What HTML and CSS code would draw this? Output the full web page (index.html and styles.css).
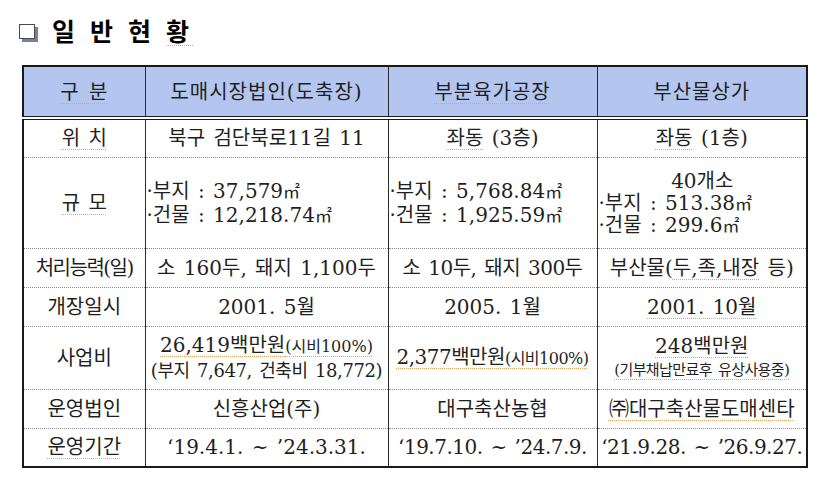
FILE: index.html
```html
<!DOCTYPE html>
<html lang="ko">
<head>
<meta charset="utf-8">
<title>일반현황</title>
<link rel="stylesheet" href="styles.css">
</head>
<body>
<div class="page">
  <h1 class="title">
    <svg class="box" width="20" height="19" viewBox="0 0 20 19" aria-hidden="true">
      <rect x="3" y="3" width="16" height="15" fill="#7383a6"/>
      <rect x="0.5" y="0.5" width="15" height="14" fill="#fff" stroke="#4a4a4a" stroke-width="1"/>
    </svg>
    <span class="title-text">일 반 현 <span class="sp">황</span></span>
  </h1>
  <table class="status">
    <colgroup>
      <col class="c1"><col class="c2"><col class="c3"><col class="c4">
    </colgroup>
    <thead>
      <tr class="h-head">
        <th><span class="sp">구 분</span></th>
        <th>도매시장법인(도축장)</th>
        <th><span class="sp">부분육가공장</span></th>
        <th>부산물상가</th>
      </tr>
    </thead>
    <tbody>
      <tr class="h39">
        <td class="label"><span class="sp">위 치</span></td>
        <td>북구 검단북로11길 11</td>
        <td><span class="sp">좌동</span> (3층)</td>
        <td><span class="sp">좌동</span> (1층)</td>
      </tr>
      <tr class="h-size">
        <td class="label"><span class="sp">규 모</span></td>
        <td class="left lines">
          <div>·부지 : 37,579<span class="unit">㎡</span></div>
          <div>·건물 : 12,218.74<span class="unit">㎡</span></div>
        </td>
        <td class="left lines">
          <div>·부지 : 5,768.84<span class="unit">㎡</span></div>
          <div>·건물 : 1,925.59<span class="unit">㎡</span></div>
        </td>
        <td class="left lines tight">
          <div class="center">40개소</div>
          <div>·부지 : 513.38<span class="unit">㎡</span></div>
          <div>·건물 : 299.6<span class="unit">㎡</span></div>
        </td>
      </tr>
      <tr class="h39">
        <td class="label squeeze">처리능력(일)</td>
        <td>소 160두, 돼지 1,100두</td>
        <td class="narrow">소 10두, 돼지 300두</td>
        <td>부산물(<span class="sp">두,족,내장</span> 등)</td>
      </tr>
      <tr class="h39">
        <td class="label">개장일시</td>
        <td>2001. 5월</td>
        <td>2005. 1월</td>
        <td><span class="sp">2001. 10월</span></td>
      </tr>
      <tr class="h-cost">
        <td class="label">사업비</td>
        <td class="lines">
          <div><span class="sp">26,419백만원<span class="small">(시비100%)</span></span></div>
          <div class="sub">(부지 7,647, 건축비 18,772)</div>
        </td>
        <td class="narrow"><span class="sp">2,377백만원<span class="small">(시비100%)</span></span></td>
        <td class="lines">
          <div><span class="sp">248백만원</span></div>
          <div class="note"><span class="sp">(기부채납만료후 유상사용중)</span></div>
        </td>
      </tr>
      <tr class="h39">
        <td class="label">운영법인</td>
        <td>신흥산업(주)</td>
        <td>대구축산농협</td>
        <td><span class="sp">㈜대구축산물도매센타</span></td>
      </tr>
      <tr class="h40">
        <td class="label"><span class="sp">운영기간</span></td>
        <td>‘19.4.1. ~ ’24.3.31.</td>
        <td class="narrow">‘19.7.10. ~ ’24.7.9.</td>
        <td class="narrow">‘21.9.28. ~ ’26.9.27.</td>
      </tr>
    </tbody>
  </table>
</div>
</body>
</html>
```

FILE: styles.css
```css
html, body {
  margin: 0;
  background: #ffffff;
}

body {
  font-family: "DejaVu Serif", "Noto Sans CJK KR", serif;
  color: #1f1f1f;
}

.page {
  padding: 13px 0 0 19px;
}

.title {
  display: flex;
  align-items: center;
  gap: 13px;
  height: 34px;
  margin: 0;
  font-family: "Noto Sans CJK KR", sans-serif;
  font-size: 25px;
  font-weight: 700;
  color: #000;
}

.box {
  display: block;
  margin-top: 7px;
}

.title-text {
  letter-spacing: 4px;
  word-spacing: 0;
}

.status {
  margin: 18px 0 0 3px;
  width: 784px;
  table-layout: fixed;
  border-collapse: collapse;
  border: 2px solid #1a1a1a;
  font-size: 20px;
  word-spacing: 2px;
}

.c1 { width: 122px; }
.c2 { width: 243px; }
.c3 { width: 209px; }
.c4 { width: 210px; }

.status th,
.status td {
  padding: 0;
  text-align: center;
  vertical-align: middle;
  font-weight: 400;
  line-height: 24px;
  border-left: 1px solid #2a2a2a;
  border-right: 1px solid #2a2a2a;
  white-space: nowrap;
  overflow: hidden;
}

.status thead th {
  background: #b4c6ef;
  border-bottom: 4px double #1a1a1a;
  letter-spacing: 1px;
}

.status tbody tr + tr td {
  border-top: 1px dotted #8c8c8c;
}

.h-head { height: 52px; }
.h39 { height: 39px; }
.h40 { height: 39px; }
.h-size { height: 91px; }
.h-cost { height: 63px; }

.left {
  text-align: left !important;
  padding-left: 1px !important;
}

.center {
  text-align: center;
}

.lines div {
  line-height: 24px;
}

.tight div {
  line-height: 22px;
  height: 22px;
}

.unit {
  font-size: 17px;
  line-height: 1;
}

.narrow {
  letter-spacing: -0.5px;
}

.squeeze {
  letter-spacing: -1.5px;
}

.small {
  font-size: 16px;
}

.sub {
  font-size: 18px;
  letter-spacing: -0.4px;
}

.note {
  font-size: 15px;
  letter-spacing: -0.6px;
  word-spacing: 2px;
}

.sp {
  text-decoration: underline dotted #e3a35a;
  text-underline-offset: 4px;
  text-decoration-thickness: 1px;
}
```
